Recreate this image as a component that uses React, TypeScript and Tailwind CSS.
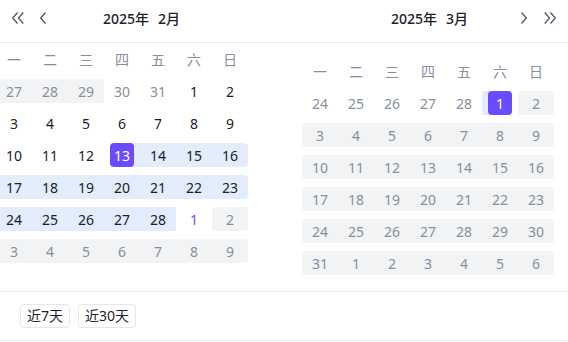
import clsx from "clsx";

type Cell = {
  day: number;
  tone?: "muted" | "accent";
  bg?: "disabled" | "range" | "start" | "end";
  roundL?: boolean;
  roundR?: boolean;
  selected?: boolean;
};

const WEEK = ["一", "二", "三", "四", "五", "六", "日"];

const seq = (from: number, to: number, extra: Partial<Cell> = {}): Cell[] =>
  Array.from({ length: to - from + 1 }, (_, i) => ({ day: from + i, ...extra }));

const withEnds = (cells: Cell[]) => {
  cells[0].roundL = true;
  cells[cells.length - 1].roundR = true;
  return cells;
};

const febRows: Cell[][] = [
  [
    ...withEnds(seq(27, 29, { tone: "muted", bg: "disabled" })).map((c, i) =>
      i === 2 ? { ...c, roundR: false } : c,
    ),
    ...seq(30, 31, { tone: "muted" }),
    ...seq(1, 2),
  ],
  seq(3, 9),
  [
    ...seq(10, 12),
    { day: 13, bg: "start", selected: true },
    ...seq(14, 16, { bg: "range" }).map((c, i) => (i === 2 ? { ...c, roundR: true } : c)),
  ],
  withEnds(seq(17, 23, { bg: "range" })),
  [
    ...seq(24, 28, { bg: "range" }).map((c, i) => (i === 0 ? { ...c, roundL: true } : c)),
    { day: 1, tone: "accent" },
    { day: 2, tone: "muted", bg: "disabled", roundL: true, roundR: true },
  ],
  withEnds(seq(3, 9, { tone: "muted", bg: "disabled" })),
];

const marRows: Cell[][] = [
  [
    ...seq(24, 28, { tone: "muted" }),
    { day: 1, bg: "end", selected: true },
    { day: 2, tone: "muted", bg: "disabled", roundL: true, roundR: true },
  ],
  withEnds(seq(3, 9, { tone: "muted", bg: "disabled" })),
  withEnds(seq(10, 16, { tone: "muted", bg: "disabled" })),
  withEnds(seq(17, 23, { tone: "muted", bg: "disabled" })),
  withEnds(seq(24, 30, { tone: "muted", bg: "disabled" })),
  withEnds([{ day: 31 }, ...seq(1, 6)].map((c) => ({ ...c, tone: "muted", bg: "disabled" }) as Cell)),
];

export default function App() {
  return (
    <div
      className="h-[341px] w-[568px] overflow-hidden border-b border-[#e5e6eb] bg-white text-[14px] text-[#1d2129]"
      style={{ fontFamily: '"Noto Sans", "Noto Sans CJK SC", sans-serif' }}
    >
      <div className="flex h-[43px] border-b border-[#e5e6eb] pt-[8px]">
        <div className="flex h-5 w-[284px] items-center">
          <div className="flex items-center gap-[16px] pl-[12px]">
            <DoubleChevron dir="left" />
            <Chevron dir="left" />
          </div>
          <Title month={2} className="ml-[57px]" />
        </div>
        <div className="flex h-5 w-[284px] items-center">
          <Title month={3} className="ml-[107px]" />
          <div className="ml-auto flex items-center gap-[17px] pr-[12px]">
            <Chevron dir="right" />
            <DoubleChevron dir="right" />
          </div>
        </div>
      </div>

      <div className="flex h-[248px]">
        <div className="w-[284px] pt-[4px]">
          <div className="-ml-[4px]">
            <MonthGrid rows={febRows} />
          </div>
        </div>
        <div className="w-[284px] pl-[18px] pt-[16px]">
          <MonthGrid rows={marRows} />
        </div>
      </div>

      <div className="flex gap-[8px] border-t border-[#e5e6eb] pl-[20px] pt-[12px]">
        <Shortcut label="近7天" />
        <Shortcut label="近30天" />
      </div>
    </div>
  );
}

function Title({ month, className }: { month: number; className?: string }) {
  return (
    <div className={clsx("flex items-center text-[14px] font-medium text-[#1d2129]", className)}>
      <span>2025年</span>
      <span className="ml-[9px]">{month}月</span>
    </div>
  );
}

function MonthGrid({ rows }: { rows: Cell[][] }) {
  return (
    <div className="grid grid-cols-[repeat(7,36px)] gap-y-[8px]">
      {WEEK.map((w) => (
        <div key={w} className="flex h-6 items-center justify-center text-[#86909c]">
          {w}
        </div>
      ))}
      {rows.flat().map((cell, i) => (
        <DayCell key={i} cell={cell} />
      ))}
    </div>
  );
}

function DayCell({ cell }: { cell: Cell }) {
  return (
    <div
      className={clsx(
        "relative flex h-6 items-center justify-center",
        cell.bg === "disabled" && "bg-[#f2f3f5]",
        cell.bg === "range" && "bg-[#e2ecfb]",
        cell.roundL && "rounded-l-[4px]",
        cell.roundR && "rounded-r-[4px]",
      )}
    >
      {cell.bg === "start" ? (
        <span className="absolute inset-y-0 left-1/2 right-0 bg-[#e2ecfb]" />
      ) : null}
      {cell.bg === "end" ? (
        <span className="absolute inset-y-0 left-0 right-1/2 bg-[#e2ecfb]" />
      ) : null}
      {cell.selected ? (
        <span className="relative flex size-6 items-center justify-center rounded-[4px] bg-[#6a4bff] text-white">
          {cell.day}
        </span>
      ) : (
        <span
          className={clsx(
            cell.tone === "muted" && "text-[#86909c]",
            cell.tone === "accent" && "text-[#6a4bff]",
          )}
        >
          {cell.day}
        </span>
      )}
    </div>
  );
}

function Shortcut({ label }: { label: string }) {
  return (
    <button
      type="button"
      className="h-6 rounded-[4px] border border-[#e5e6eb] bg-white px-[6px] text-[14px] leading-[22px] text-[#1d2129]"
    >
      {label}
    </button>
  );
}

function Chevron({ dir }: { dir: "left" | "right" }) {
  return (
    <svg width="6" height="12" viewBox="0 0 6 12" fill="none" stroke="#4e5969" strokeWidth="1.3">
      {dir === "left" ? <path d="M5.5 0.5 L0.7 6 L5.5 11.5" /> : <path d="M0.5 0.5 L5.3 6 L0.5 11.5" />}
    </svg>
  );
}

function DoubleChevron({ dir }: { dir: "left" | "right" }) {
  return (
    <svg width="12" height="12" viewBox="0 0 12 12" fill="none" stroke="#4e5969" strokeWidth="1.3">
      {dir === "left" ? (
        <>
          <path d="M5.5 0.5 L0.7 6 L5.5 11.5" />
          <path d="M11.3 0.5 L6.5 6 L11.3 11.5" />
        </>
      ) : (
        <>
          <path d="M0.7 0.5 L5.5 6 L0.7 11.5" />
          <path d="M6.5 0.5 L11.3 6 L6.5 11.5" />
        </>
      )}
    </svg>
  );
}
